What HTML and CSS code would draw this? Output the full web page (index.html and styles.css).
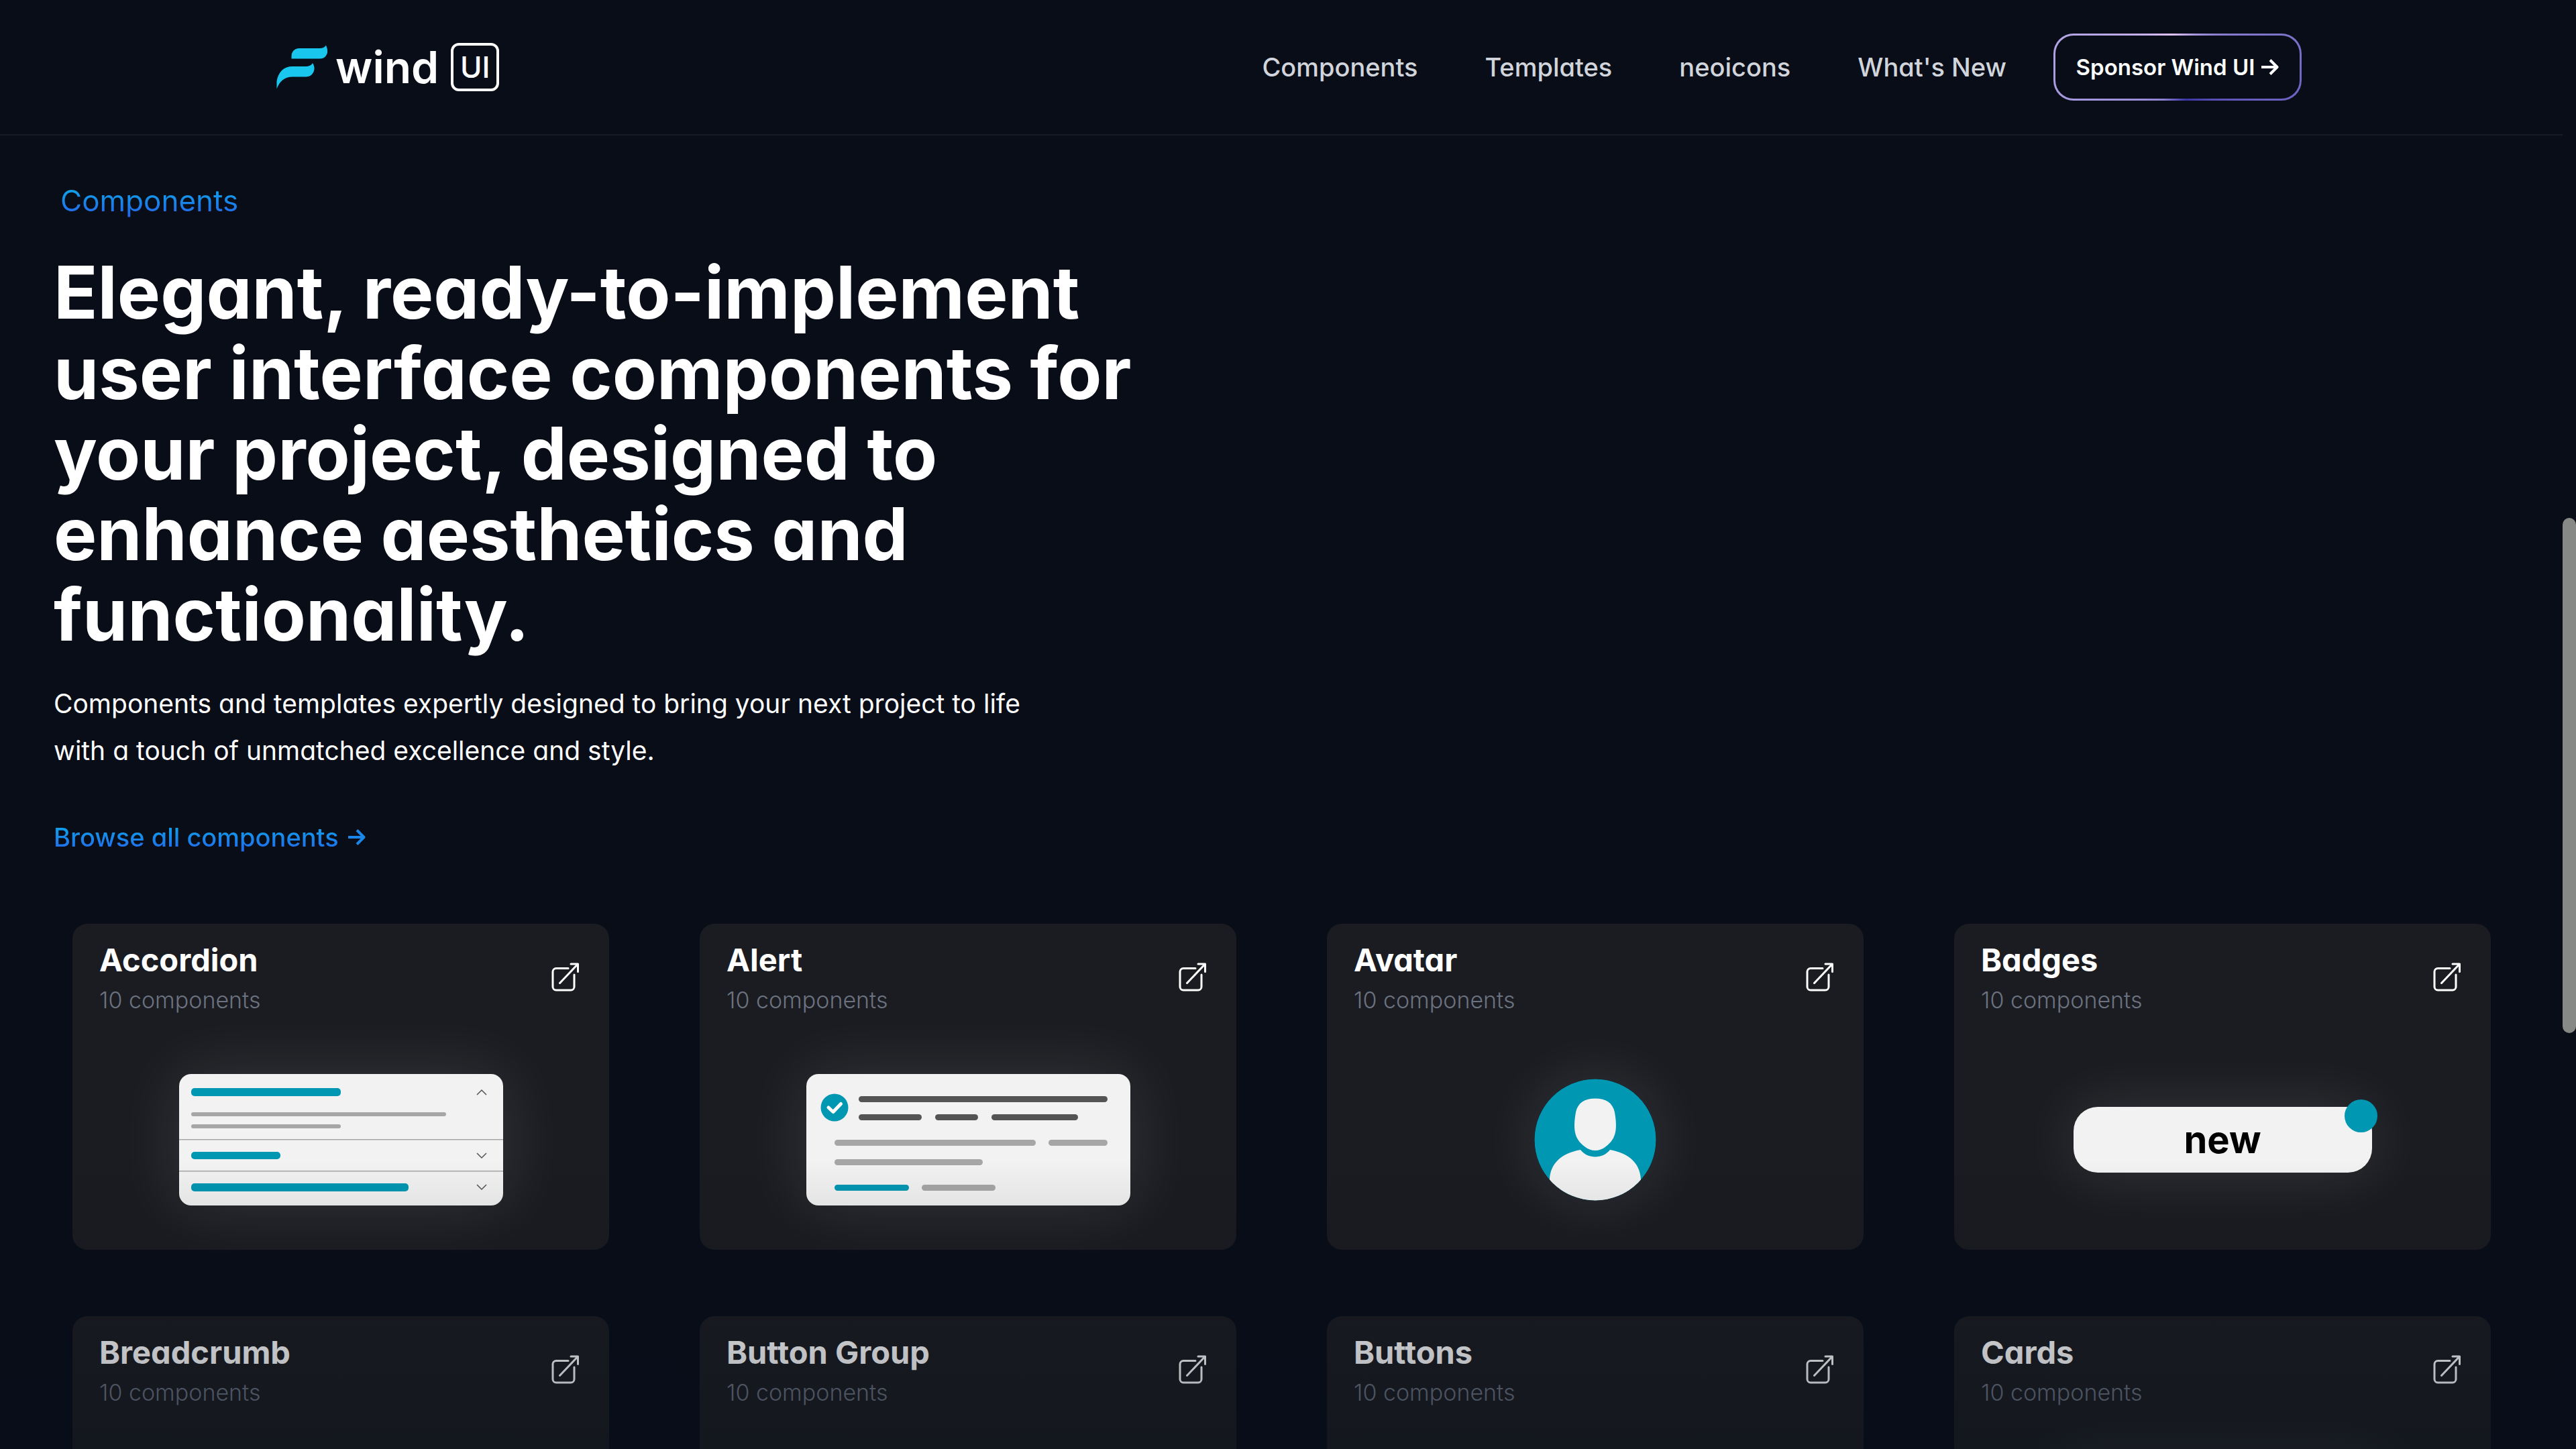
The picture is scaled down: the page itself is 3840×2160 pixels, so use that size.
FILE: index.html
```html
<!DOCTYPE html>
<html lang="en">
<head>
<meta charset="utf-8">
<meta name="viewport" content="width=device-width, initial-scale=1">
<title>Wind UI – Components</title>
<link rel="stylesheet" href="styles.css">
</head>
<body>
<svg class="sprite" aria-hidden="true">
  <symbol id="open" viewBox="0 0 48 48">
    <g fill="none" stroke="currentColor" stroke-width="3" stroke-linecap="round" stroke-linejoin="round">
      <path d="M27 8.500H9a5 5 0 0 0-5 5V36a5 5 0 0 0 5 5h22a5 5 0 0 0 5-5V18"/>
      <path d="M14.500 30.500L41.500 2M31 2h10.500v11.500"/>
    </g>
  </symbol>
  <symbol id="arrow" viewBox="0 0 28 26">
    <path d="M2 13h23M15 2.500L25.500 13 15 23.500" fill="none" stroke="currentColor" stroke-width="4" stroke-linejoin="round"/>
  </symbol>
</svg>
<div class="shell">
  <header class="topbar">
    <a class="logo" href="#" aria-label="Wind UI">
      <svg class="logo-mark" viewBox="0 0 76 66" aria-hidden="true">
        <path fill="#19c6ee" d="M22.500 20.500V17C22.500 10 27 5 34 5H64C69 5 72 3.500 74 0.500C77 8 77 12 74 16C72 19 69 20.500 64 20.500Z"/>
        <path fill="#19c6ee" d="M0.500 65.500V54C3 40 11 32 24 32H43C49 32 52 30.500 54 27C57 32 57.500 36 55 41C52.500 45.500 49 47.500 43 47.500H24C12 47.500 5 54 0.500 65.500Z"/>
      </svg>
      <span class="logo-word">wind</span>
      <span class="logo-box">UI</span>
    </a>
    <div class="topbar-right">
      <nav class="nav" aria-label="Main">
        <a href="#">Components</a>
        <a href="#">Templates</a>
        <a href="#">neoicons</a>
        <a href="#">What's New</a>
      </nav>
      <a class="sponsor" href="#">Sponsor Wind UI <svg class="arrow" aria-hidden="true"><use href="#arrow"/></svg></a>
    </div>
  </header>

  <main class="content">
    <section class="intro">
      <p class="eyebrow">Components</p>
      <h1>Elegant, ready-to-implement user interface components for your project, designed to enhance aesthetics and functionality.</h1>
      <p class="lead">Components and templates expertly designed to bring your next project to life with a touch of unmatched excellence and style.</p>
      <a class="browse" href="#"><span>Browse all components</span> <svg class="arrow" aria-hidden="true"><use href="#arrow"/></svg></a>
    </section>

    <section class="cards">
      <a class="card" href="#">
        <div class="card-head"><div><h2>Accordion</h2><p>10 components</p></div><svg class="open" aria-hidden="true"><use href="#open"/></svg></div>
        <div class="preview">
          <svg class="panel" viewBox="0 0 483 196" aria-hidden="true">
            <g fill="#0097b2"><rect x="18" y="21" width="223" height="12" rx="5"/><rect x="18" y="116" width="133" height="11" rx="5"/><rect x="18" y="163" width="324" height="12" rx="5"/></g>
            <g fill="#a6a6a6"><rect x="18" y="57" width="380" height="6" rx="3"/><rect x="18" y="75" width="223" height="6" rx="3"/><rect y="97" width="483" height="1.500"/><rect y="144" width="483" height="1.500"/></g>
            <g fill="none" stroke="#545454" stroke-width="1.500"><path d="M444 31l7-7 7 7"/><path d="M444 118l7 7 7-7"/><path d="M444 165l7 7 7-7"/></g>
          </svg>
        </div>
      </a>
      <a class="card" href="#">
        <div class="card-head"><div><h2>Alert</h2><p>10 components</p></div><svg class="open" aria-hidden="true"><use href="#open"/></svg></div>
        <div class="preview">
          <svg class="panel" viewBox="0 0 483 196" aria-hidden="true">
            <circle cx="42" cy="50" r="20.500" fill="#0097b2"/>
            <path d="M33 50l7 6.500L51.500 44.500" fill="none" stroke="#fff" stroke-width="5" stroke-linecap="round" stroke-linejoin="round"/>
            <g fill="#545454"><rect x="78" y="33" width="371" height="9" rx="4.500"/><rect x="78" y="60" width="94" height="9" rx="4.500"/><rect x="192" y="60" width="64" height="9" rx="4.500"/><rect x="276" y="60" width="129" height="9" rx="4.500"/></g>
            <g fill="#a6a6a6"><rect x="42" y="98" width="300" height="9" rx="4.500"/><rect x="361" y="98" width="88" height="9" rx="4.500"/><rect x="42" y="127" width="221" height="9" rx="4.500"/><rect x="172" y="165" width="110" height="9" rx="4.500"/></g>
            <rect x="42" y="165" width="111" height="9" rx="4.500" fill="#0097b2"/>
          </svg>
        </div>
      </a>
      <a class="card" href="#">
        <div class="card-head"><div><h2>Avatar</h2><p>10 components</p></div><svg class="open" aria-hidden="true"><use href="#open"/></svg></div>
        <div class="preview">
          <svg class="avatar" viewBox="0 0 182 182" aria-hidden="true">
            <clipPath id="disc"><circle cx="91" cy="91" r="90.500"/></clipPath>
            <g clip-path="url(#disc)">
              <rect width="182" height="182" fill="#0097b2"/>
              <path fill="#f2f2f2" d="M91 29.500C107 29.500 117 36 120 50C124 74 123 89 107 101C97 109 85 109 75 101C59 89 58 74 62 50C65 36 75 29.500 91 29.500Z"/>
              <path fill="#f2f2f2" d="M69 106C80 120 102 120 113 106C142 111 158 127 159 150V182H23V150C24 127 40 111 69 106Z"/>
            </g>
          </svg>
        </div>
      </a>
      <a class="card" href="#">
        <div class="card-head"><div><h2>Badges</h2><p>10 components</p></div><svg class="open" aria-hidden="true"><use href="#open"/></svg></div>
        <div class="preview"><span class="badge">new</span></div>
      </a>
      <a class="card" href="#">
        <div class="card-head"><div><h2>Breadcrumb</h2><p>10 components</p></div><svg class="open" aria-hidden="true"><use href="#open"/></svg></div>
      </a>
      <a class="card" href="#">
        <div class="card-head"><div><h2>Button Group</h2><p>10 components</p></div><svg class="open" aria-hidden="true"><use href="#open"/></svg></div>
      </a>
      <a class="card" href="#">
        <div class="card-head"><div><h2>Buttons</h2><p>10 components</p></div><svg class="open" aria-hidden="true"><use href="#open"/></svg></div>
      </a>
      <a class="card" href="#">
        <div class="card-head"><div><h2>Cards</h2><p>10 components</p></div><svg class="open" aria-hidden="true"><use href="#open"/></svg></div>
        <div class="preview"><div class="panel"></div></div>
      </a>
    </section>
  </main>
  <div class="fade"></div>
  <div class="thumb"></div>
</div>
</body>
</html>
```

FILE: styles.css
```css
* {
  box-sizing: border-box;
  margin: 0;
}

:root {
  --bg: #080d18;
  --teal: #0097b2;
}

body {
  background: var(--bg);
  color: #fff;
  font-family: Inter, "Open Sans", sans-serif;
  font-feature-settings: "cv11";
  font-size: 38px;
}

a {
  color: inherit;
  text-decoration: none;
}

.sprite {
  position: absolute;
  width: 0;
  height: 0;
}

.shell {
  position: relative;
  display: flex;
  flex-direction: column;
  height: 100vh;
  padding-right: 20px;
  overflow: hidden;
}

/* Top bar */
.topbar {
  flex: none;
  display: flex;
  align-items: center;
  justify-content: space-between;
  height: 202px;
  padding: 0 389px 0 412px;
  border-bottom: 2px solid #161b26;
}

.logo {
  display: flex;
  align-items: center;
}

.logo-mark {
  width: 76px;
  height: 66px;
  margin-right: 12px;
}

.logo-word {
  font-size: 66px;
  font-weight: 600;
  line-height: 72px;
}

.logo-box {
  display: grid;
  place-items: center;
  width: 72px;
  height: 72px;
  margin-left: 18px;
  border: 4px solid #fff;
  border-radius: 12px;
  font-size: 44px;
  font-weight: 500;
}

.topbar-right {
  display: flex;
  align-items: center;
  gap: 70px;
}

.nav {
  display: flex;
  gap: 100px;
  color: #d1d5db;
  font-weight: 500;
}

.sponsor {
  display: flex;
  align-items: center;
  justify-content: center;
  gap: 8px;
  width: 370px;
  height: 100px;
  border: 3px solid transparent;
  border-radius: 30px;
  background:
    linear-gradient(var(--bg), var(--bg)) padding-box,
    conic-gradient(from 350deg, #e2c4f5, #8a7fd0 60deg, #6a5ec0 120deg, #3a35a5 175deg, #8d82d2 215deg, #b0a2e4 290deg, #e2c4f5) border-box;
  font-size: 33px;
  font-weight: 600;
}

.arrow {
  flex: none;
  width: 28px;
  height: 26px;
}

/* Intro */
.content {
  flex: 1;
  min-height: 0;
  padding-top: 66px;
}

.intro {
  padding: 0 80px;
}

.eyebrow,
.browse span {
  background: linear-gradient(#0ea5e9 20%, #2563eb 90%);
  background-clip: text;
  color: transparent;
}

.eyebrow {
  width: fit-content;
  padding-left: 10px;
  font-size: 44px;
  line-height: 62px;
}

h1 {
  max-width: 1640px;
  margin-top: 46px;
  font-size: 108px;
  font-weight: 700;
  line-height: 120px;
}

.lead {
  max-width: 1480px;
  margin-top: 38px;
  font-size: 39px;
  line-height: 70px;
}

.browse {
  display: flex;
  align-items: center;
  gap: 12px;
  width: fit-content;
  margin-top: 64px;
  color: #1b86e8;
  font-weight: 500;
  line-height: 60px;
}

/* Component cards */
.cards {
  display: grid;
  grid-template-columns: repeat(4, 1fr);
  gap: 99px 135px;
  padding: 99px 107px 99px 108px;
}

.card {
  display: flex;
  flex-direction: column;
  justify-content: space-between;
  min-height: 486px;
  padding: 22px 40px 66px;
  border-radius: 22px;
  background: #1b1c21;
}

.card-head {
  display: flex;
  align-items: center;
  justify-content: space-between;
}

h2 {
  font-size: 47px;
  font-weight: 700;
  line-height: 64px;
}

.card-head p {
  color: #6b7280;
  font-size: 34px;
  font-weight: 300;
  line-height: 56px;
}

.open {
  width: 48px;
  height: 48px;
}

.preview {
  display: grid;
  place-items: center;
  height: 196px;
}

.panel {
  width: 483px;
  height: 196px;
  border-radius: 18px;
  background: #f2f2f2;
  box-shadow: 0 0 100px rgba(255, 255, 255, 0.12);
}

.avatar {
  width: 182px;
  height: 182px;
  border-radius: 50%;
  box-shadow: 0 0 90px rgba(255, 255, 255, 0.12);
}

.badge {
  position: relative;
  display: grid;
  place-items: center;
  width: 445px;
  height: 98px;
  border-radius: 36px;
  background: #f2f2f2;
  box-shadow: 0 0 90px rgba(255, 255, 255, 0.12);
  color: #000;
  font-size: 56px;
  font-weight: 700;
}

.badge::after {
  content: "";
  position: absolute;
  top: -11px;
  right: -8px;
  width: 49px;
  height: 49px;
  border-radius: 50%;
  background: var(--teal);
}

/* Overlays: bottom fade and scroll thumb */
.fade {
  position: absolute;
  inset: auto 0 0;
  height: 430px;
  background: linear-gradient(rgba(8, 15, 26, 0), rgba(8, 15, 26, 0.38));
}

.thumb {
  position: absolute;
  top: 772px;
  right: 0;
  width: 20px;
  height: 768px;
  border-radius: 10px;
  background: #878987;
}
```
